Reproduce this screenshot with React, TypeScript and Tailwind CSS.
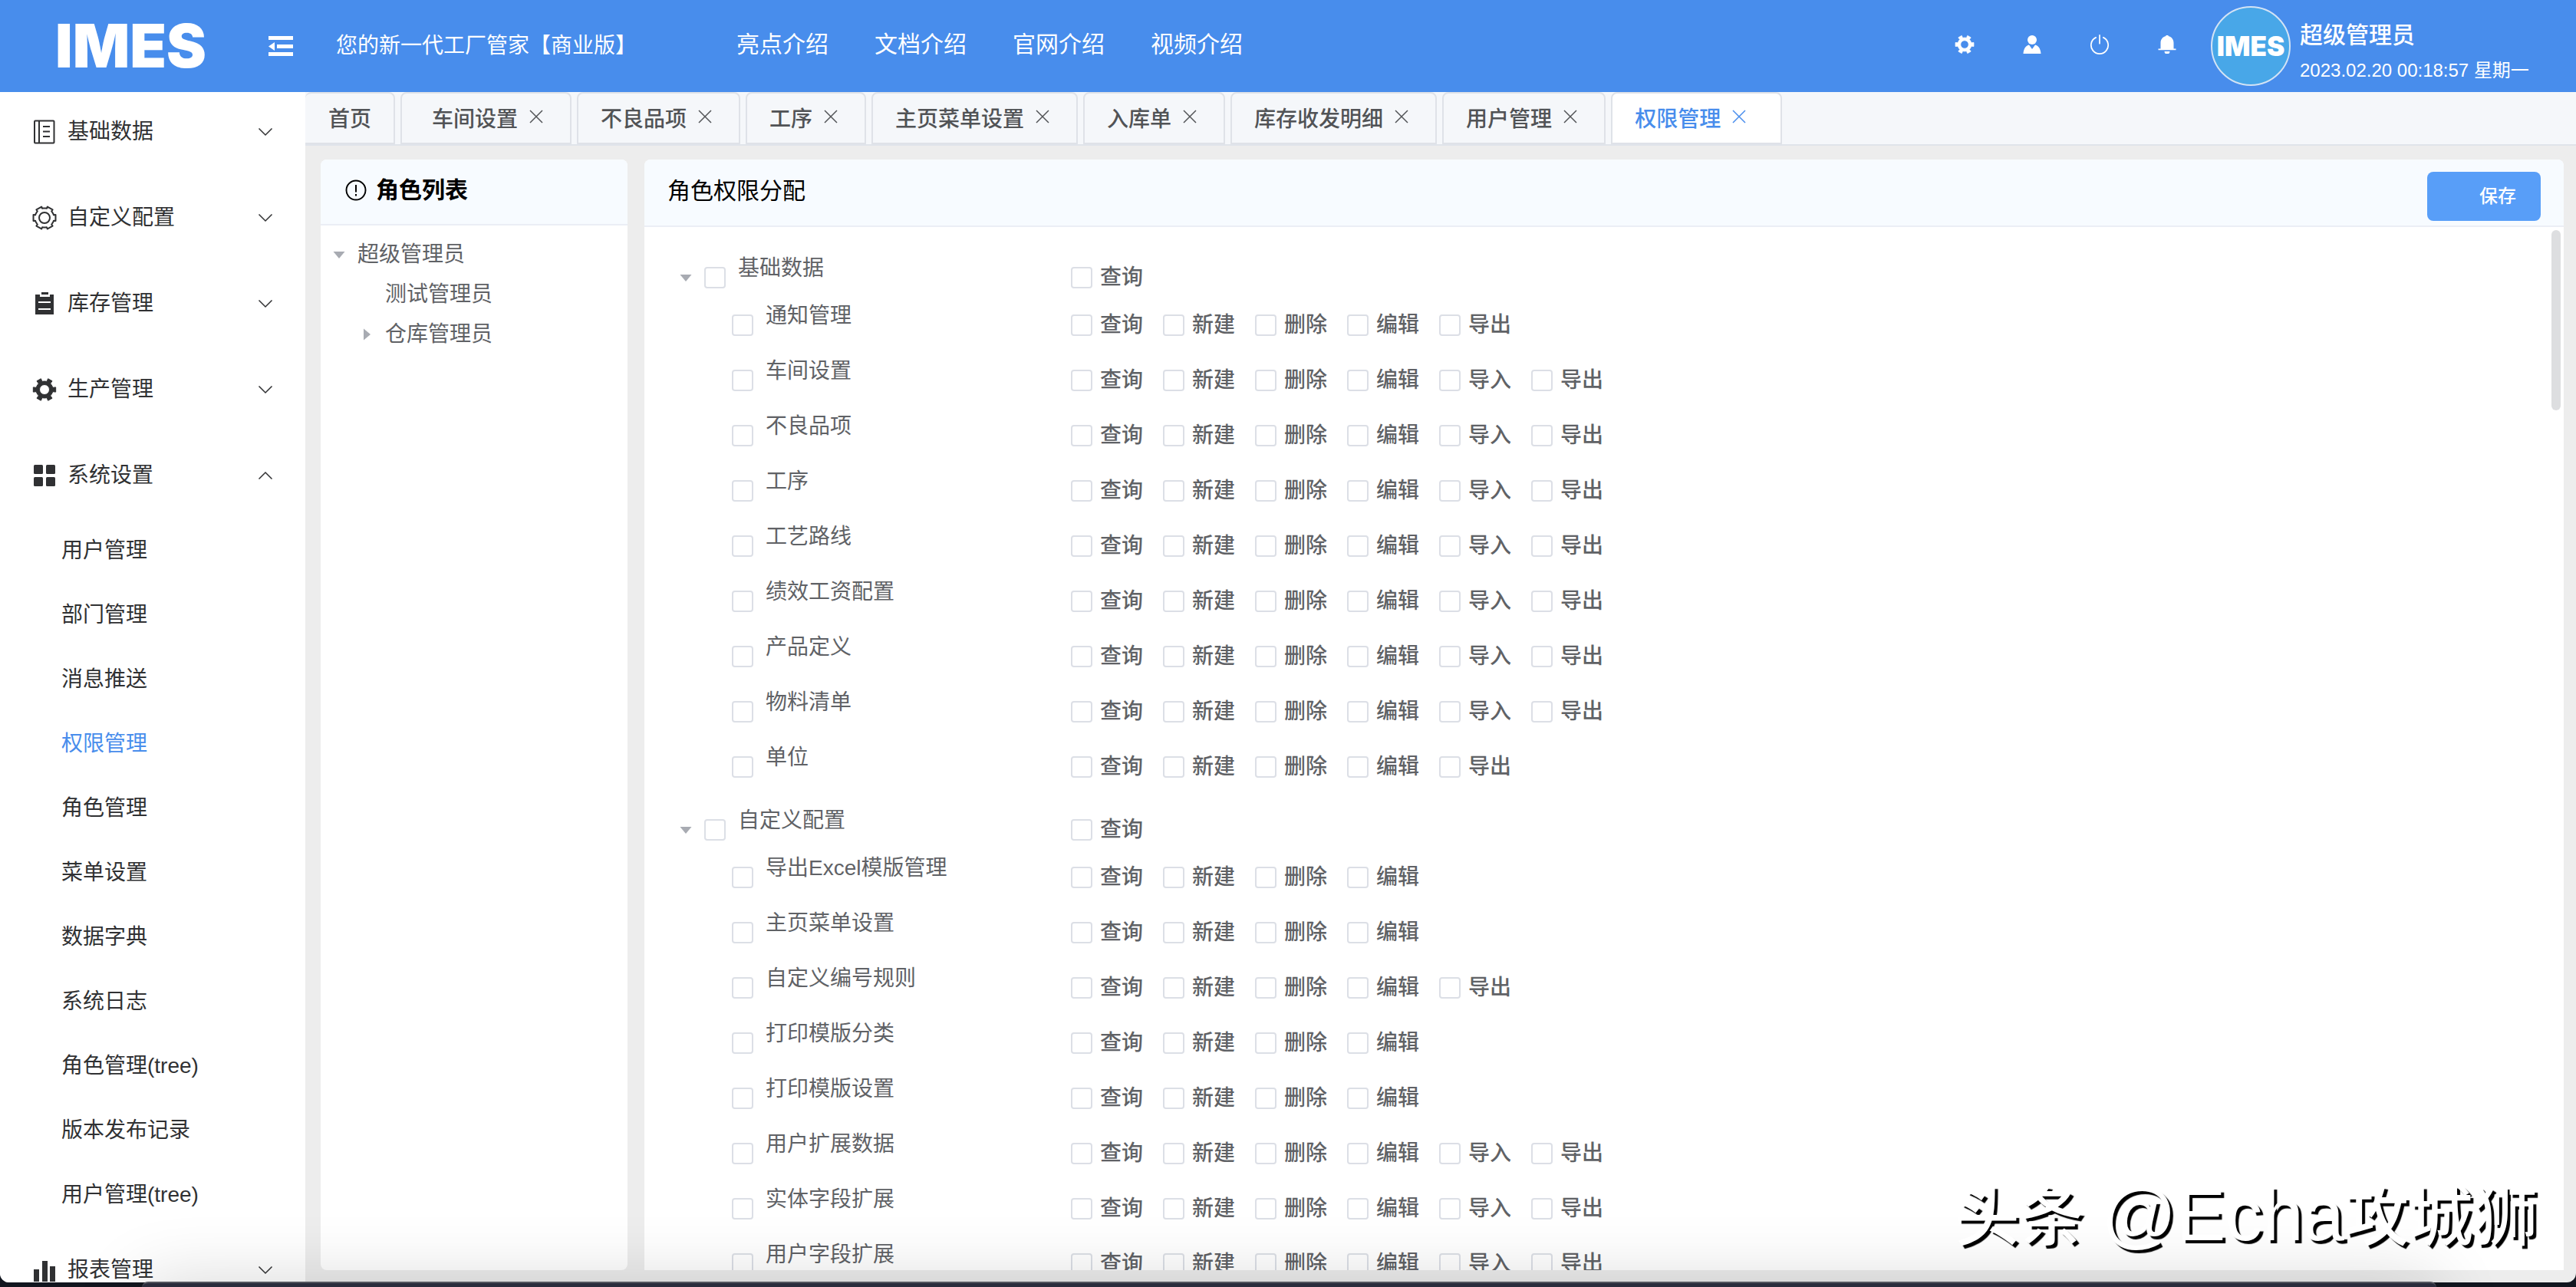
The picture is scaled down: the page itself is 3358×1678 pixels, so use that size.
import React, { useState } from 'react';

type IconProps = { className?: string };

// Closed outline of a six-toothed gear in a 32x32 box
const gearPath = (valley: number, toothHalf: number) => {
  const points = [0, 60, 120, 180, 240, 300]
    .flatMap((base) => [
      [base - 23, valley],
      [base - toothHalf - 2, valley],
      [base - toothHalf, 15],
      [base + toothHalf, 15],
      [base + toothHalf + 2, valley],
      [base + 23, valley],
    ])
    .map(([deg, r]) => {
      const rad = (deg * Math.PI) / 180;
      return `${(16 + r * Math.cos(rad)).toFixed(2)} ${(16 + r * Math.sin(rad)).toFixed(2)}`;
    });
  return `M${points.join('L')}Z`;
};

const GearSolid: React.FC<IconProps> = ({ className }) => (
  <svg viewBox="0 0 32 32" className={className} fill="currentColor" stroke="currentColor" strokeLinejoin="round">
    <path fillRule="evenodd" d={`${gearPath(11, 12)}M16 9.5a6.5 6.5 0 1 0 0 13a6.5 6.5 0 1 0 0 -13Z`} />
  </svg>
);

const GearOutline: React.FC<IconProps> = ({ className }) => (
  <svg viewBox="0 0 32 32" className={className} fill="none" stroke="currentColor" strokeWidth="2" strokeLinejoin="round">
    <path d={gearPath(12.5, 15)} />
    <circle cx="16" cy="16" r="7" />
  </svg>
);

const NotebookIcon: React.FC<IconProps> = ({ className }) => (
  <svg viewBox="0 0 32 32" className={className} fill="none" stroke="currentColor" strokeWidth="2">
    <rect x="3" y="1.5" width="25.5" height="29" rx="1" />
    <path d="M9 1.5v29M14 9h9M14 15.5h9M14 22h9" />
  </svg>
);

const ClipboardIcon: React.FC<IconProps> = ({ className }) => (
  <svg viewBox="0 0 32 32" className={className} fill="currentColor">
    <path d="M12 1h9v3h-9z" />
    <path fillRule="evenodd" d="M4 4h6v3h13V4h5v26H4ZM8 13v2h16v-2ZM8 22v2h16v-2Z" />
  </svg>
);

const GridIcon: React.FC<IconProps> = ({ className }) => (
  <svg viewBox="0 0 32 32" className={className} fill="currentColor">
    <rect x="2" y="2" width="12" height="12" rx="1.5" />
    <rect x="18" y="2" width="12" height="12" rx="1.5" />
    <rect x="2" y="18" width="12" height="12" rx="1.5" />
    <rect x="18" y="18" width="12" height="12" rx="1.5" />
  </svg>
);

const BarsIcon: React.FC<IconProps> = ({ className }) => (
  <svg viewBox="0 0 32 32" className={className} fill="currentColor">
    <path d="M2 15h7v16H2zM13 4h7v27h-7zM23 11h7v20h-7z" />
  </svg>
);

const FoldIcon: React.FC<IconProps> = ({ className }) => (
  <svg viewBox="0 0 32 28" className={className} fill="currentColor">
    <path d="M0 1h32v5H0zM11 12h21v5H11zM0 22h32v5H0zM0 14.5l8-5.5v11z" />
  </svg>
);

const UserIcon: React.FC<IconProps> = ({ className }) => (
  <svg viewBox="0 0 24 24" className={className} fill="currentColor">
    <circle cx="12" cy="6" r="6" />
    <path d="M0.5 24C1 17 4 13.5 8 12.5L12 18L16 12.5C20 13.5 23 17 23.5 24Z" />
  </svg>
);

const PowerIcon: React.FC<IconProps> = ({ className }) => (
  <svg viewBox="0 0 24 24" className={className} fill="none" stroke="currentColor" strokeWidth="1.6" strokeLinecap="round">
    <path d="M12 0.8v10M7.5 3.6a10.3 10.3 0 1 0 9 0" />
  </svg>
);

const BellIcon: React.FC<IconProps> = ({ className }) => (
  <svg viewBox="0 0 24 24" className={className} fill="currentColor">
    <path d="M10.5 0h3v1C18 2 20.5 5.5 20.5 10v7.5H23.5v1.8H0.5v-1.8H3.5V10C3.5 5.5 6 2 10.5 1ZM8.5 21h7a3.5 3.5 0 0 1 -7 0Z" />
  </svg>
);

const WarningIcon: React.FC<IconProps> = ({ className }) => (
  <svg viewBox="0 0 28 28" className={className} fill="none" stroke="currentColor" strokeWidth="2">
    <circle cx="14" cy="14" r="12.5" />
    <path d="M14 7v9.5M14 19v2.5" />
  </svg>
);

const ChevronIcon: React.FC<IconProps> = ({ className }) => (
  <svg viewBox="0 0 20 12" className={className} fill="none" stroke="currentColor" strokeWidth="1.5">
    <path d="M1.5 1.5L10 10L18.5 1.5" />
  </svg>
);

const CloseIcon: React.FC<IconProps> = ({ className }) => (
  <svg viewBox="0 0 20 20" className={className} fill="none" stroke="currentColor" strokeWidth="1.5">
    <path d="M2 2l16 16M18 2L2 18" />
  </svg>
);

const CaretIcon: React.FC<IconProps> = ({ className }) => (
  <svg viewBox="0 0 20 20" className={className} fill="#a8abb2">
    <path d="M2.5 6h15L10 15z" />
  </svg>
);

interface MenuGroup {
  title: string;
  icon: React.FC<IconProps>;
  children: string[];
}

const menuGroups: MenuGroup[] = [
  { title: '基础数据', icon: NotebookIcon, children: [] },
  { title: '自定义配置', icon: GearOutline, children: [] },
  { title: '库存管理', icon: ClipboardIcon, children: [] },
  { title: '生产管理', icon: GearSolid, children: [] },
  {
    title: '系统设置',
    icon: GridIcon,
    children: [
      '用户管理',
      '部门管理',
      '消息推送',
      '权限管理',
      '角色管理',
      '菜单设置',
      '数据字典',
      '系统日志',
      '角色管理(tree)',
      '版本发布记录',
      '用户管理(tree)',
    ],
  },
  { title: '报表管理', icon: BarsIcon, children: [] },
];

const navLinks = ['亮点介绍', '文档介绍', '官网介绍', '视频介绍'];

const tabs = ['首页', '车间设置', '不良品项', '工序', '主页菜单设置', '入库单', '库存收发明细', '用户管理', '权限管理'];

const BASIC = ['查询', '新建', '删除', '编辑'];
const WITH_EXPORT = [...BASIC, '导出'];
const FULL = [...BASIC, '导入', '导出'];

const permissionTree = [
  {
    name: '基础数据',
    children: [
      { name: '通知管理', actions: WITH_EXPORT },
      { name: '车间设置', actions: FULL },
      { name: '不良品项', actions: FULL },
      { name: '工序', actions: FULL },
      { name: '工艺路线', actions: FULL },
      { name: '绩效工资配置', actions: FULL },
      { name: '产品定义', actions: FULL },
      { name: '物料清单', actions: FULL },
      { name: '单位', actions: WITH_EXPORT },
    ],
  },
  {
    name: '自定义配置',
    children: [
      { name: '导出Excel模版管理', actions: BASIC },
      { name: '主页菜单设置', actions: BASIC },
      { name: '自定义编号规则', actions: WITH_EXPORT },
      { name: '打印模版分类', actions: BASIC },
      { name: '打印模版设置', actions: BASIC },
      { name: '用户扩展数据', actions: FULL },
      { name: '实体字段扩展', actions: FULL },
      { name: '用户字段扩展', actions: FULL },
    ],
  },
];

const checkboxClass =
  'h-7 w-7 shrink-0 appearance-none rounded-sm border-2 border-[#dcdfe6] bg-white checked:border-[#488dec] checked:bg-[#488dec]';

const Header: React.FC = () => (
  <header className="flex h-[120px] shrink-0 items-center bg-[#488dec] text-white">
    <div className="w-[350px] shrink-0 pl-[72px] font-['Inter',sans-serif] text-[78px] leading-[80px] font-black">IMES</div>
    <button type="button" aria-label="折叠菜单">
      <FoldIcon className="h-7 w-8" />
    </button>
    <h1 className="ml-[56px] w-[392px] shrink-0 text-[28px] leading-10 whitespace-nowrap">您的新一代工厂管家【商业版】</h1>
    <nav className="ml-[130px] flex gap-[60px] pb-1 text-[30px] leading-10 whitespace-nowrap">
      {navLinks.map((link) => (
        <a key={link} href="#">
          {link}
        </a>
      ))}
    </nav>
    <div className="ml-auto flex gap-[62px] pb-1">
      <button type="button" aria-label="设置">
        <GearSolid className="h-[26px] w-[26px]" />
      </button>
      <button type="button" aria-label="个人中心">
        <UserIcon className="h-[26px] w-[26px] p-px" />
      </button>
      <button type="button" aria-label="退出">
        <PowerIcon className="h-[26px] w-[26px]" />
      </button>
      <button type="button" aria-label="消息">
        <BellIcon className="h-[26px] w-[26px] p-px" />
      </button>
    </div>
    <div className="ml-[44px] flex h-[104px] w-[104px] shrink-0 items-center justify-center rounded-full border-2 border-[#d3e3f5] bg-[#48a7e8] font-['Inter',sans-serif] text-[35px] leading-10 font-black">
      IMES
    </div>
    <div className="ml-3 w-[360px] shrink-0 pt-3.5 whitespace-nowrap">
      <div className="text-[30px] leading-10 font-medium">超级管理员</div>
      <div className="pt-2.5 text-2xl">2023.02.20 00:18:57 星期一</div>
    </div>
  </header>
);

const Sidebar: React.FC = () => {
  const [opened, setOpened] = useState('系统设置');

  return (
    <aside className="w-[398px] shrink-0 overflow-hidden bg-white text-[28px] leading-10 text-[#303133]">
      {menuGroups.map(({ title, icon: Icon, children }) => (
        <div key={title}>
          <button
            type="button"
            className="flex h-[112px] w-full items-center pr-[42px] pb-2 pl-[42px]"
            onClick={() => setOpened(opened === title ? '' : title)}
          >
            <Icon className="h-8 w-8" />
            <span className="ml-3.5">{title}</span>
            <ChevronIcon className={opened === title ? 'ml-auto h-3 w-5 rotate-180' : 'ml-auto h-3 w-5'} />
          </button>
          {opened === title &&
            children.map((item) => (
              <a
                key={item}
                href="#"
                className={`flex h-[84px] items-center pb-2 pl-20 ${item === '权限管理' ? 'text-[#488dec]' : ''}`}
              >
                {item}
              </a>
            ))}
        </div>
      ))}
    </aside>
  );
};

const tabPadding = (index: number) => {
  if (index === 0) return 'border-l-0 pl-[30px] pr-[29px]';
  if (index === 1) return 'pl-[39px] pr-[34px]';
  if (index === tabs.length - 1) return 'pl-[29px] pr-[44px]';
  return 'pl-[29px] pr-[34px]';
};

const TabBar: React.FC = () => (
  <div className="flex h-[70px] shrink-0 items-start gap-[7px] border-b-2 border-[#e0e4ea] bg-[#f5f7fa]">
    {tabs.map((tab, index) => (
      <div
        key={tab}
        className={`flex h-[68px] items-center rounded-t-lg border-2 border-[#dfe2e8] pt-1 text-[28px] leading-10 font-medium ${
          tab === '权限管理' ? 'bg-white text-[#488dec]' : 'text-[#515356]'
        } ${tabPadding(index)}`}
      >
        <button type="button">{tab}</button>
        {index > 0 && (
          <button type="button" aria-label={`关闭${tab}`} className="ml-3.5 pb-2">
            <CloseIcon className="h-5 w-5" />
          </button>
        )}
      </div>
    ))}
  </div>
);

const RolePanel: React.FC = () => (
  <section className="w-[400px] shrink-0 overflow-hidden rounded-lg bg-white text-[28px] text-[#606266]">
    <div className="flex h-[86px] items-center gap-3 border-b-2 border-[#ebeef5] bg-[#f7fbff] pb-1 pl-8 text-black">
      <WarningIcon className="h-7 w-7" />
      <h2 className="text-[30px] leading-10 font-bold">角色列表</h2>
    </div>
    <ul className="pt-3 leading-[52px]">
      <li>
        <div className="flex items-center pl-[14px]">
          <CaretIcon className="h-5 w-5" />
          <span className="ml-3.5">超级管理员</span>
        </div>
        <ul className="pl-[50px]">
          <li className="pl-[34px]">测试管理员</li>
          <li className="flex items-center">
            <CaretIcon className="h-5 w-5 -rotate-90" />
            <span className="ml-3.5">仓库管理员</span>
          </li>
        </ul>
      </li>
    </ul>
  </section>
);

const Actions: React.FC<{ actions: string[] }> = ({ actions }) => (
  <div className="flex gap-[26px] font-medium">
    {actions.map((action) => (
      <label key={action} className="flex items-center gap-[10px] whitespace-nowrap">
        <input type="checkbox" className={checkboxClass} />
        {action}
      </label>
    ))}
  </div>
);

const PermissionPanel: React.FC = () => (
  <section className="flex min-w-0 flex-1 flex-col overflow-hidden rounded-t-lg bg-white">
    <div className="flex h-[88px] shrink-0 items-center justify-between border-b-2 border-[#ebeef5] bg-[#f7fbff] pr-[30px] pl-[30px]">
      <h2 className="pb-1 text-[30px] leading-10 text-black">角色权限分配</h2>
      <button type="button" className="mt-2.5 h-16 w-[148px] rounded-lg bg-[#589ef8] pr-8 text-right text-2xl font-medium text-white">
        保存
      </button>
    </div>
    <div className="flex min-h-0 flex-1 items-start overflow-hidden pr-1">
      <ul className="flex-1 pt-10 text-[28px] leading-10 text-[#606266]">
        {permissionTree.map((group) => (
          <li key={group.name} className="pb-5">
            <div className="flex h-[52px] items-center">
              <div className="flex w-[556px] shrink-0 items-center pl-[44px]">
                <CaretIcon className="h-5 w-5" />
                <label className="ml-3.5 flex items-center gap-4">
                  <input type="checkbox" className={checkboxClass} />
                  <span className="pb-6">{group.name}</span>
                </label>
              </div>
              <Actions actions={['查询']} />
            </div>
            <ul>
              {group.children.map((node) => (
                <li key={node.name} className="flex h-[72px] items-center">
                  <div className="w-[556px] shrink-0 pl-[114px]">
                    <label className="flex items-center gap-4">
                      <input type="checkbox" className={checkboxClass} />
                      <span className="pb-6">{node.name}</span>
                    </label>
                  </div>
                  <Actions actions={node.actions} />
                </li>
              ))}
            </ul>
          </li>
        ))}
      </ul>
      <div className="mt-1 h-[235px] w-3 rounded-full bg-[#dddee0]" />
    </div>
  </section>
);

const Watermark: React.FC = () => (
  <div className="pointer-events-none absolute right-[50px] bottom-[38px] text-[84px] leading-[104px] font-medium whitespace-nowrap text-white [text-shadow:4px_4px_1px_#000]">
    头条 <span className="text-[96px]">@Echa</span>攻城狮
  </div>
);

export default function App() {
  return (
    <div className="relative flex h-screen flex-col overflow-hidden bg-[#12161f] pb-[6px] font-['Liberation_Sans','Noto_Sans_CJK_SC',sans-serif]">
      <div className="flex min-h-0 flex-1 flex-col overflow-hidden rounded-b-xl bg-[#ededed]">
        <Header />
        <div className="flex min-h-0 flex-1">
          <Sidebar />
          <main className="flex min-w-0 flex-1 flex-col">
            <TabBar />
            <div className="flex min-h-0 flex-1 gap-[22px] pt-[18px] pr-4 pb-4 pl-5">
              <RolePanel />
              <PermissionPanel />
            </div>
          </main>
        </div>
      </div>
      {/* top edge of the dock, which casts its shadow on the window */}
      <div className="absolute right-[182px] -bottom-[113px] left-[185px] h-[120px] rounded-t-lg border-t-2 border-[#53555e] bg-[#2a2c3c] shadow-[0_0_90px_rgba(0,0,0,0.16)]" />
      <Watermark />
    </div>
  );
}
